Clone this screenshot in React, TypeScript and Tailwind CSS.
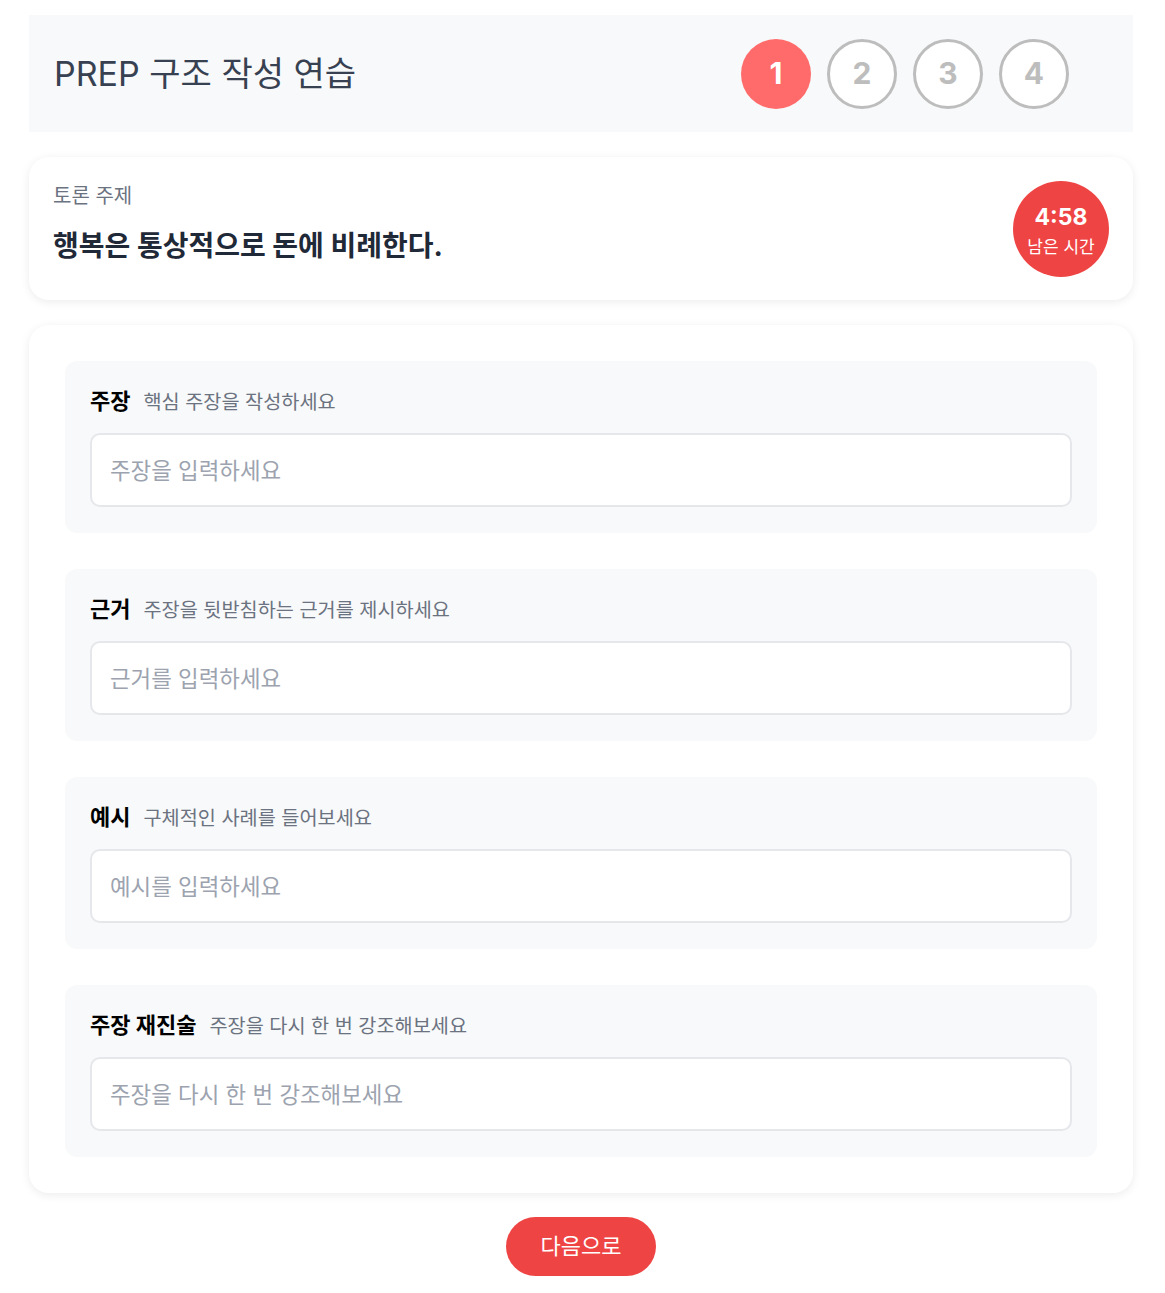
import React from "react";

const font = { fontFamily: '"Inter", "Noto Sans CJK KR", sans-serif' };

const sections = [
  { title: "주장", desc: "핵심 주장을 작성하세요", ph: "주장을 입력하세요" },
  { title: "근거", desc: "주장을 뒷받침하는 근거를 제시하세요", ph: "근거를 입력하세요" },
  { title: "예시", desc: "구체적인 사례를 들어보세요", ph: "예시를 입력하세요" },
  { title: "주장 재진술", desc: "주장을 다시 한 번 강조해보세요", ph: "주장을 다시 한 번 강조해보세요" },
];

export default function App() {
  return (
    <div className="min-h-[1293px] bg-white" style={font}>
      <div className="ml-[29px] w-[1104px] pt-[15px] pb-4 flex flex-col">
        <header className="h-[117px] bg-[#f8f9fa] flex items-center justify-between pl-[25px] pr-[64px]">
          <h1 className="text-[34px] text-[#374151] font-normal leading-none">PREP 구조 작성 연습</h1>
          <div className="flex gap-[16px]">
            <div className="w-[70px] h-[70px] rounded-full bg-[#ff6b6b] flex items-center justify-center text-white text-[30px] font-bold">1</div>
            {[2, 3, 4].map((n) => (
              <div key={n} className="w-[70px] h-[70px] rounded-full border-[3px] border-[#bdbdbd] bg-white flex items-center justify-center text-[#bdbdbd] text-[30px] font-bold">
                {n}
              </div>
            ))}
          </div>
        </header>

        <section className="mt-[25px] h-[143px] bg-white rounded-[20px] shadow-[0_2px_10px_rgba(0,0,0,0.08)] px-[24px] pt-[24px] flex items-start justify-between">
          <div className="flex flex-col">
            <div className="text-[20px] leading-[28px] text-[#6b7280] mt-[1px]">토론 주제</div>
            <div className="mt-[16px] text-[28px] leading-[40px] font-bold text-[#1f2937]">행복은 통상적으로 돈에 비례한다.</div>
          </div>
          <div className="w-[96px] h-[96px] rounded-full bg-[#ef4444] flex flex-col items-center justify-center text-white">
            <div className="text-[23px] font-bold leading-[30px] mt-[2px]">4:58</div>
            <div className="text-[17px] leading-[24px] mt-[3px]">남은 시간</div>
          </div>
        </section>

        <section className="mt-[25px] bg-white rounded-[20px] shadow-[0_2px_10px_rgba(0,0,0,0.08)] p-[36px] flex flex-col gap-[36px]">
          {sections.map((s) => (
            <div key={s.title} className="bg-[#f8f9fa] rounded-[12px] px-[25px] pt-[24px] pb-[26px]">
              <div className="flex items-baseline gap-[13px] h-[32px]">
                <span className="text-[22px] font-bold text-black">{s.title}</span>
                <span className="text-[19.7px] text-[#6b7280]">{s.desc}</span>
              </div>
              <input
                className="mt-[16px] w-full h-[74px] bg-white rounded-[10px] border-2 border-[#e5e7eb] px-[18px] text-[22.4px] placeholder:text-[#9ca3af] outline-none"
                placeholder={s.ph}
              />
            </div>
          ))}
        </section>

        <div className="mt-[24px] flex justify-center">
          <button className="h-[59px] px-[35px] rounded-full bg-[#ef4444] text-white text-[22px]">다음으로</button>
        </div>
      </div>
    </div>
  );
}
